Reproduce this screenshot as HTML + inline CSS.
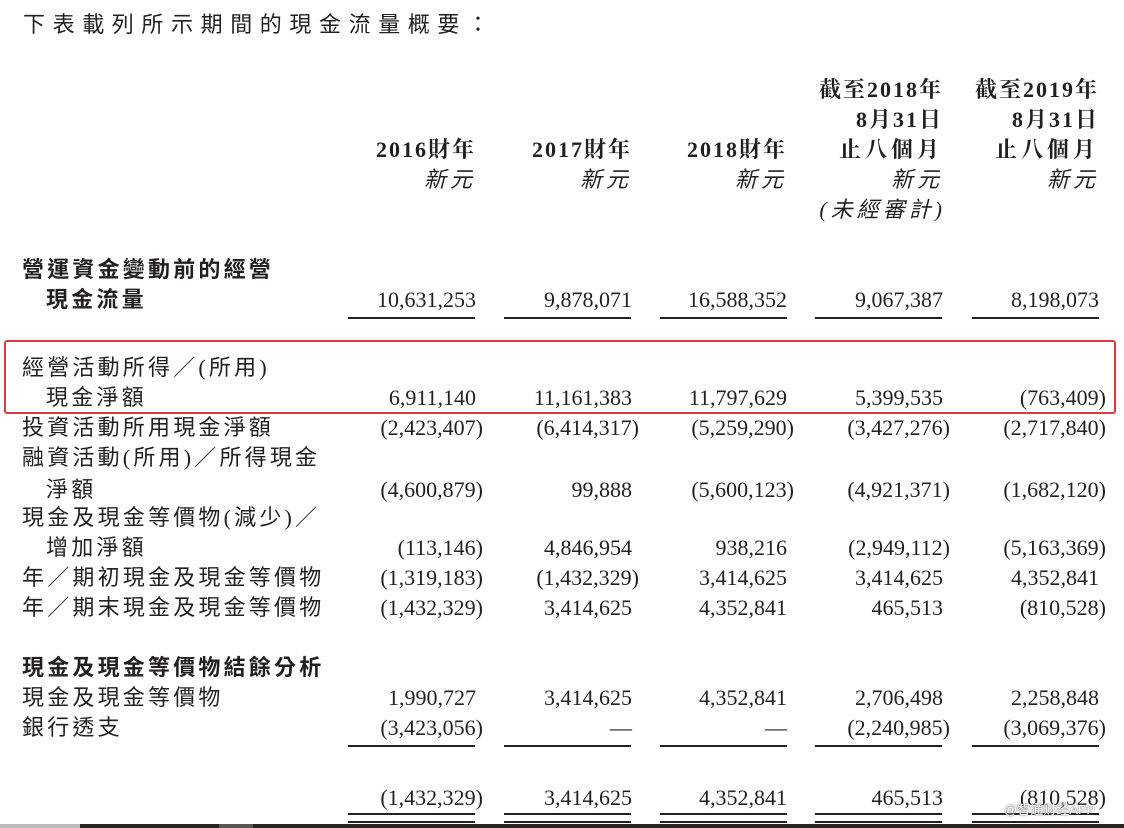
<!DOCTYPE html>
<html><head><meta charset="utf-8"><style>
html,body{margin:0;padding:0;background:#fff;}
body{width:1124px;height:828px;position:relative;overflow:hidden;color:#231f20;
font-family:"Liberation Serif","Noto Serif CJK SC","Noto Sans CJK TC",serif;}
.a{position:absolute;white-space:nowrap;line-height:26px;font-size:22px;}
.t{font-family:"Liberation Serif","Noto Sans CJK TC",sans-serif;}
.l{left:22px;letter-spacing:3.2px;font-family:"Liberation Serif","Noto Sans CJK TC",sans-serif;}
.l2{left:46px;}
.b{font-weight:bold;}
.i{font-style:italic;letter-spacing:4px;font-family:"Liberation Serif","Noto Sans CJK TC",sans-serif;}
.c1{right:648px}.c2{right:492px}.c3{right:337px}.c4{right:181px}.c5{right:25px}
.p1{right:641px}.p2{right:485px}.p3{right:330px}.p4{right:174px}.p5{right:18px}
.u{position:absolute;height:1.5px;background:#231f20;width:127px;}
.d{position:absolute;width:127px;height:6px;border-top:2px solid #231f20;border-bottom:2px solid #231f20;}
</style></head><body>
<div class="a t" style="left:23px;top:12px;letter-spacing:7.6px;">下表載列所示期間的現金流量概要：</div>

<div class="a b c4" style="top:77px;letter-spacing:2px;">截至2018年</div>
<div class="a b c5" style="top:77px;letter-spacing:2px;">截至2019年</div>
<div class="a b c4" style="top:107px;letter-spacing:2px;">8月31日</div>
<div class="a b c5" style="top:107px;letter-spacing:2px;">8月31日</div>
<div class="a b c1" style="top:137px;letter-spacing:2px;">2016財年</div>
<div class="a b c2" style="top:137px;letter-spacing:2px;">2017財年</div>
<div class="a b c3" style="top:137px;letter-spacing:2px;">2018財年</div>
<div class="a b c4" style="top:137px;letter-spacing:4px;">止八個月</div>
<div class="a b c5" style="top:137px;letter-spacing:4px;">止八個月</div>
<div class="a i c1" style="top:167px;">新元</div>
<div class="a i c2" style="top:167px;">新元</div>
<div class="a i c3" style="top:167px;">新元</div>
<div class="a i c4" style="top:167px;">新元</div>
<div class="a i c5" style="top:167px;">新元</div>
<div class="a i" style="top:197px;right:178px;">(未經審計)</div>

<div class="a l b" style="top:257px;">營運資金變動前的經營</div>
<div class="a l l2 b" style="top:287px;">現金流量</div>
<div class="a c1" style="top:287px;">10,631,253</div>
<div class="a c2" style="top:287px;">9,878,071</div>
<div class="a c3" style="top:287px;">16,588,352</div>
<div class="a c4" style="top:287px;">9,067,387</div>
<div class="a c5" style="top:287px;">8,198,073</div>
<div class="u" style="left:348px;top:317px"></div><div class="u" style="left:504px;top:317px"></div><div class="u" style="left:660px;top:317px"></div><div class="u" style="left:815px;top:317px"></div><div class="u" style="left:972px;top:317px"></div>

<div style="position:absolute;left:4px;top:340px;width:1108px;height:70px;border:2px solid #e0393e;border-radius:3px;"></div>
<div class="a l" style="top:355px;">經營活動所得／(所用)</div>
<div class="a l l2" style="top:385px;">現金淨額</div>
<div class="a c1" style="top:385px;">6,911,140</div>
<div class="a c2" style="top:385px;">11,161,383</div>
<div class="a c3" style="top:385px;">11,797,629</div>
<div class="a c4" style="top:385px;">5,399,535</div>
<div class="a p5" style="top:385px;">(763,409)</div>

<div class="a l" style="top:415px;">投資活動所用現金淨額</div>
<div class="a p1" style="top:415px;">(2,423,407)</div>
<div class="a p2" style="top:415px;">(6,414,317)</div>
<div class="a p3" style="top:415px;">(5,259,290)</div>
<div class="a p4" style="top:415px;">(3,427,276)</div>
<div class="a p5" style="top:415px;">(2,717,840)</div>

<div class="a l" style="top:445px;">融資活動(所用)／所得現金</div>
<div class="a l l2" style="top:477px;">淨額</div>
<div class="a p1" style="top:477px;">(4,600,879)</div>
<div class="a c2" style="top:477px;">99,888</div>
<div class="a p3" style="top:477px;">(5,600,123)</div>
<div class="a p4" style="top:477px;">(4,921,371)</div>
<div class="a p5" style="top:477px;">(1,682,120)</div>

<div class="a l" style="top:505px;">現金及現金等價物(減少)／</div>
<div class="a l l2" style="top:535px;">增加淨額</div>
<div class="a p1" style="top:535px;">(113,146)</div>
<div class="a c2" style="top:535px;">4,846,954</div>
<div class="a c3" style="top:535px;">938,216</div>
<div class="a p4" style="top:535px;">(2,949,112)</div>
<div class="a p5" style="top:535px;">(5,163,369)</div>

<div class="a l" style="top:565px;">年／期初現金及現金等價物</div>
<div class="a p1" style="top:565px;">(1,319,183)</div>
<div class="a p2" style="top:565px;">(1,432,329)</div>
<div class="a c3" style="top:565px;">3,414,625</div>
<div class="a c4" style="top:565px;">3,414,625</div>
<div class="a c5" style="top:565px;">4,352,841</div>

<div class="a l" style="top:595px;">年／期末現金及現金等價物</div>
<div class="a p1" style="top:595px;">(1,432,329)</div>
<div class="a c2" style="top:595px;">3,414,625</div>
<div class="a c3" style="top:595px;">4,352,841</div>
<div class="a c4" style="top:595px;">465,513</div>
<div class="a p5" style="top:595px;">(810,528)</div>

<div class="a l b" style="top:655px;">現金及現金等價物結餘分析</div>
<div class="a l" style="top:685px;">現金及現金等價物</div>
<div class="a c1" style="top:685px;">1,990,727</div>
<div class="a c2" style="top:685px;">3,414,625</div>
<div class="a c3" style="top:685px;">4,352,841</div>
<div class="a c4" style="top:685px;">2,706,498</div>
<div class="a c5" style="top:685px;">2,258,848</div>

<div class="a l" style="top:715px;">銀行透支</div>
<div class="a p1" style="top:715px;">(3,423,056)</div>
<div class="a c2" style="top:715px;">—</div>
<div class="a c3" style="top:715px;">—</div>
<div class="a p4" style="top:715px;">(2,240,985)</div>
<div class="a p5" style="top:715px;">(3,069,376)</div>
<div class="u" style="left:348px;top:745px"></div><div class="u" style="left:504px;top:745px"></div><div class="u" style="left:660px;top:745px"></div><div class="u" style="left:815px;top:745px"></div><div class="u" style="left:972px;top:745px"></div>

<div class="a p1" style="top:785px;">(1,432,329)</div>
<div class="a c2" style="top:785px;">3,414,625</div>
<div class="a c3" style="top:785px;">4,352,841</div>
<div class="a c4" style="top:785px;">465,513</div>
<div class="a p5" style="top:785px;">(810,528)</div>
<div class="d" style="left:348px;top:813px"></div><div class="d" style="left:504px;top:813px"></div><div class="d" style="left:660px;top:813px"></div><div class="d" style="left:815px;top:813px"></div><div class="d" style="left:972px;top:813px"></div>
<div style="position:absolute;left:1004px;top:799px;font-size:13px;color:#fff;font-family:'Liberation Sans','Noto Sans CJK SC',sans-serif;text-shadow:0 0 2px #888,0 0 1px #666;">@智通财经APP</div>

<div style="position:absolute;left:0;top:824px;width:80px;height:4px;background:#bbb"></div>
<div style="position:absolute;left:80px;top:824px;width:1044px;height:4px;background:#2a2522"></div>
<div style="position:absolute;left:219px;top:824px;width:34px;height:4px;background:#5a5552"></div>
</body></html>
